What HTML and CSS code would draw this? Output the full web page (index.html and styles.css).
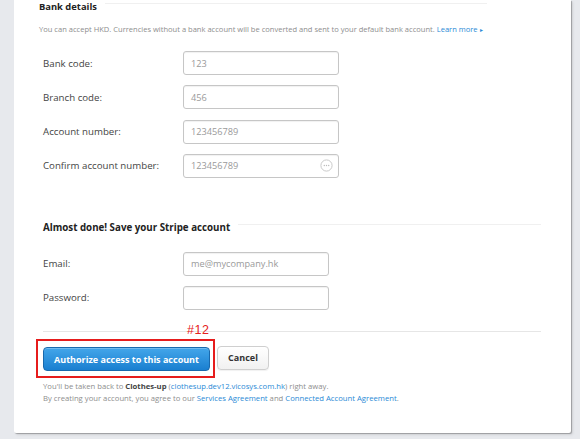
FILE: index.html
```html
<!DOCTYPE html>
<html>
<head>
<meta charset="utf-8">
<link rel="stylesheet" href="styles.css">
</head>
<body>
<div class="card">
  <div class="section-head">
    <h2 class="heading">Bank details</h2>
    <span class="rule rule-short"></span>
  </div>
  <p class="desc">You can accept HKD. Currencies without a bank account will be converted and sent to your default bank account. <a class="link">Learn more</a> <span class="arrow">&#9656;</span></p>

  <div class="rows rows-bank">
    <div class="row"><label class="lbl">Bank code:</label><div class="input"><span class="ph">123</span></div></div>
    <div class="row"><label class="lbl">Branch code:</label><div class="input"><span class="ph">456</span></div></div>
    <div class="row"><label class="lbl">Account number:</label><div class="input"><span class="ph">123456789</span></div></div>
    <div class="row"><label class="lbl">Confirm account number:</label><div class="input"><span class="ph">123456789</span>
      <svg class="dots" width="13" height="13" viewBox="0 0 13 13"><circle cx="6.5" cy="6.5" r="5.6" fill="none" stroke="#c9c9c9" stroke-width="1"/><circle cx="4.3" cy="6.5" r="0.7" fill="#bbb"/><circle cx="6.5" cy="6.5" r="0.7" fill="#bbb"/><circle cx="8.7" cy="6.5" r="0.7" fill="#bbb"/></svg>
    </div></div>
  </div>

  <div class="section-head section-two">
    <h2 class="heading heading-sm">Almost done! Save your Stripe account</h2>
    <span class="rule"></span>
  </div>

  <div class="rows rows-account">
    <div class="row"><label class="lbl">Email:</label><div class="input input-narrow"><span class="ph">me@mycompany.hk</span></div></div>
    <div class="row"><label class="lbl">Password:</label><div class="input input-narrow"></div></div>
  </div>

  <div class="divider"></div>

  <div class="actions">
    <div class="primary-wrap">
      <span class="note">#12</span>
      <button class="btn btn-primary">Authorize access to this account</button>
    </div>
    <button class="btn btn-cancel">Cancel</button>
  </div>

  <p class="foot">You'll be taken back to <b>Clothes-up</b> (<a class="link">clothesup.dev12.vicosys.com.hk</a>) right away.</p>
  <p class="foot">By creating your account, you agree to our <a class="link">Services Agreement</a> and <a class="link">Connected Account Agreement</a>.</p>
</div>
</body>
</html>
```

FILE: styles.css
```css
html, body {
  margin: 0;
  padding: 0;
  background: #e7e9ed;
  width: 580px;
  height: 439px;
  overflow: hidden;
}
body {
  font-family: "Open Sans", "Noto Sans", sans-serif;
  color: #333;
}
.card {
  margin-left: 14px;
  width: 557px;
  background: #fff;
  box-shadow: 1px 1px 1px rgba(0,0,0,0.28), 2px 2px 3px rgba(0,0,0,0.08);
  padding: 0 30px 29px 25px;
  box-sizing: border-box;
  border-bottom-right-radius: 2px;
  border-bottom-left-radius: 2px;
}
.section-head {
  display: flex;
  align-items: flex-start;
  height: 14px;
}
.heading {
  margin: 0;
  font-size: 9.4px;
  line-height: 14px;
  font-weight: 700;
  color: #222;
  white-space: nowrap;
}
.heading-sm { font-size: 9.75px; margin-left: 4px; }
.rule {
  flex: 1;
  height: 1px;
  background: #f0f0f0;
  margin: 3px 0 0 8px;
}
.rule-short { margin-right: 54px; }
.desc {
  margin: 8px 0 0 0;
  font-size: 7.55px;
  line-height: 14px;
  color: #8e8e8e;
  white-space: nowrap;
}
.link { color: #2a8ad6; text-decoration: none; }
.arrow { color: #2a8ad6; font-size: 6px; }
.rows {
  display: flex;
  flex-direction: column;
  margin-left: 4px;
}
.rows-bank { margin-top: 14px; gap: 10.3px; }
.rows-account { margin-top: 17px; gap: 10px; }
.row {
  display: flex;
  align-items: center;
  height: 24px;
}
.lbl {
  width: 140px;
  font-size: 9.7px;
  color: #444;
}
.input {
  width: 156px;
  height: 24px;
  box-sizing: border-box;
  border: 1px solid #c6c6c6;
  border-radius: 3px;
  box-shadow: inset 0 1px 1px rgba(0,0,0,0.06);
  display: flex;
  align-items: center;
  padding: 0 7px;
  position: relative;
}
.input-narrow { width: 146px; }
.ph {
  font-size: 9.2px;
  color: #9a9a9a;
  flex: 1;
}
.dots { flex: none; margin-right: -2px; }
.section-two { margin-top: 43px; }
.divider {
  margin: 21px 0 0 4px;
  height: 1px;
  background: #e6e6e6;
}
.actions {
  display: flex;
  gap: 7px;
  margin: 14px 0 0 4px;
}
.primary-wrap { position: relative; }
.note {
  position: absolute;
  left: 144px;
  top: -23px;
  font-family: "Liberation Sans", sans-serif;
  font-size: 12.5px;
  color: #e62020;
  letter-spacing: 0.5px;
}
.primary-wrap::after {
  content: "";
  position: absolute;
  left: -7px;
  top: -7px;
  right: -5px;
  bottom: -7px;
  border: 2px solid #e61c1c;
}
.btn {
  height: 24px;
  box-sizing: border-box;
  border-radius: 4px;
  font-family: "Open Sans", sans-serif;
  font-weight: 700;
  font-size: 9px;
  padding: 0;
  cursor: pointer;
}
.btn-primary {
  width: 167px;
  color: #fff;
  border: 1px solid #1969ad;
  background: linear-gradient(#43a6ea, #1a7fd0);
  box-shadow: inset 0 1px 0 rgba(255,255,255,0.25);
}
.btn-cancel {
  width: 52px;
  color: #333;
  border: 1px solid #cfcfcf;
  background: linear-gradient(#fff, #f1f1f1);
  box-shadow: 0 1px 1px rgba(0,0,0,0.06);
}
.foot {
  margin: 0 0 0 4px;
  font-size: 7.7px;
  line-height: 12px;
  color: #8e8e8e;
  white-space: nowrap;
}
.foot b { color: #444; }
.actions + .foot { margin-top: 9px; }
```
